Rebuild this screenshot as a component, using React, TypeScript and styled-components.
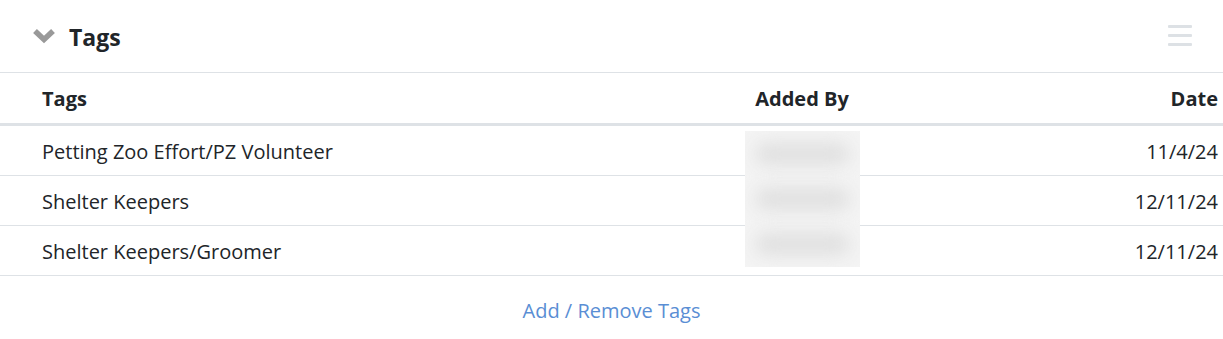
import styled, { createGlobalStyle } from "styled-components";

const GlobalStyle = createGlobalStyle`
  body {
    margin: 0;
    background: #fff;
    font-family: "Open Sans", "Noto Sans", sans-serif;
    color: #212529;
  }
`;

type TagRow = {
  tag: string;
  date: string;
};

const rows: TagRow[] = [
  { tag: "Petting Zoo Effort/PZ Volunteer", date: "11/4/24" },
  { tag: "Shelter Keepers", date: "12/11/24" },
  { tag: "Shelter Keepers/Groomer", date: "12/11/24" },
];

export default function App() {
  return (
    <>
      <GlobalStyle />
      <Panel>
        <PanelHeader>
          <TitleGroup>
            <svg width="22" height="16" viewBox="0 0 22 16">
              <path d="M2 3 L11 11.5 L20 3" fill="none" stroke="#999" strokeWidth="5.5" />
            </svg>
            <Title>Tags</Title>
          </TitleGroup>
          <MenuButton aria-label="menu">
            <span />
            <span />
            <span />
          </MenuButton>
        </PanelHeader>

        <Table>
          <HeadRow>
            <Cell>Tags</Cell>
            <Cell $align="center">Added By</Cell>
            <Cell $align="right">Date</Cell>
          </HeadRow>
          <Body>
            {rows.map((r) => (
              <Row key={r.tag}>
                <Cell>{r.tag}</Cell>
                <Cell $align="center" />
                <Cell $align="right">{r.date}</Cell>
              </Row>
            ))}
            <Redacted>
              <Smudge />
              <Smudge />
              <Smudge />
            </Redacted>
          </Body>
        </Table>

        <Footer>
          <EditLink href="#">Add / Remove Tags</EditLink>
        </Footer>
      </Panel>
    </>
  );
}

const Panel = styled.div`
  width: 1223px;
  display: flex;
  flex-direction: column;
`;

const PanelHeader = styled.div`
  height: 73px;
  display: flex;
  align-items: center;
  justify-content: space-between;
  padding: 2px 31px 0 33px;
  border-bottom: 1px solid #dee2e6;
  box-sizing: border-box;
`;

const TitleGroup = styled.div`
  display: flex;
  align-items: center;
  gap: 14px;
  svg {
    margin-top: -3px;
  }
`;

const Title = styled.h2`
  margin: 0;
  font-size: 23px;
  font-weight: 700;
  line-height: 1;
`;

const MenuButton = styled.div`
  width: 24px;
  display: flex;
  flex-direction: column;
  gap: 6px;
  margin-top: -3px;
  span {
    display: block;
    height: 3px;
    background: #dde1e5;
    border-radius: 1px;
  }
`;

const Table = styled.div`
  display: flex;
  flex-direction: column;
`;

const HeadRow = styled.div`
  display: grid;
  grid-template-columns: 661px 198px 1fr;
  height: 53px;
  align-items: center;
  padding: 1px 5px 0 42px;
  font-weight: 700;
  border-bottom: 3px solid #dee2e6;
  box-sizing: border-box;
`;

const Body = styled.div`
  position: relative;
`;

const Row = styled.div`
  display: grid;
  grid-template-columns: 661px 198px 1fr;
  height: 50px;
  align-items: center;
  padding: 2px 5px 0 42px;
  border-bottom: 1px solid #dee2e6;
  box-sizing: border-box;
`;

const Cell = styled.div<{ $align?: "left" | "center" | "right" }>`
  font-size: 20px;
  text-align: ${(p) => p.$align ?? "left"};
  white-space: nowrap;
`;

const Redacted = styled.div`
  position: absolute;
  left: 745px;
  top: 5px;
  width: 115px;
  height: 136px;
  background: #f4f4f4;
  overflow: hidden;
  display: flex;
  flex-direction: column;
  justify-content: space-around;
  align-items: center;
`;

const Smudge = styled.div`
  width: 95px;
  height: 22px;
  border-radius: 11px;
  background: #dfdfdf;
  filter: blur(9px);
`;

const Footer = styled.div`
  display: flex;
  justify-content: center;
  padding-top: 21px;
`;

const EditLink = styled.a`
  font-size: 20px;
  color: #5a8ed4;
  text-decoration: none;
`;
